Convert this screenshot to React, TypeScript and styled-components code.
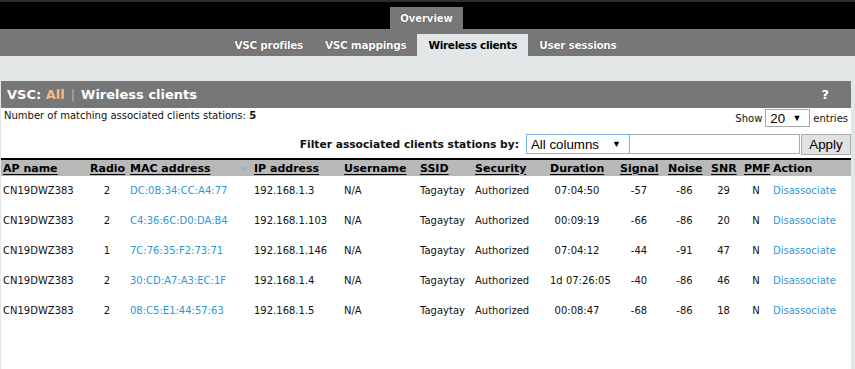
import React from "react";
import styled, { createGlobalStyle } from "styled-components";

const GlobalStyle = createGlobalStyle`
  html, body { margin: 0; padding: 0; }
  body {
    background: #e3e7e8;
    font-family: "DejaVu Sans", Verdana, sans-serif;
    color: #111;
    height: 369px;
    overflow: hidden;
  }
  * { box-sizing: border-box; }
`;

const TopBar = styled.div`
  height: 29px;
  background: #000;
  border-top: 2px solid #2e2e2e;
  display: flex;
  justify-content: center;
  align-items: flex-end;
  padding-right: 2px;
`;

const MainTab = styled.div`
  height: 22px;
  padding: 0 10px;
  background: #777;
  color: #fff;
  font-weight: bold;
  font-size: 10px;
  display: flex;
  align-items: center;
  text-shadow: 0 0 1px #333;
`;

const SubNav = styled.div`
  height: 27px;
  background: #777;
  display: flex;
  justify-content: center;
  align-items: flex-end;
  padding-right: 4px;
`;

const SubTab = styled.div<{ $active?: boolean }>`
  height: 22px;
  padding: 0 11px;
  display: flex;
  align-items: center;
  font-weight: bold;
  font-size: 10.5px;
  letter-spacing: -0.3px;
  white-space: nowrap;
  background: ${(p) => (p.$active ? "#e3e7e8" : "transparent")};
  color: ${(p) => (p.$active ? "#000" : "#fff")};
  text-shadow: ${(p) => (p.$active ? "none" : "0 0 1px #222")};
`;

const Main = styled.div`
  padding: 25px 4px 0 1px;
`;

const Panel = styled.div`
  background: #fff;
  height: 288px;
`;

const PanelHeader = styled.div`
  height: 27px;
  background: #777;
  display: flex;
  align-items: center;
  justify-content: space-between;
  padding: 0 22px 0 6px;
  color: #fff;
  font-weight: bold;
  font-size: 13px;
`;

const Accent = styled.span`
  color: #f6b887;
`;

const Pipe = styled.span`
  color: #b5b5b5;
  font-weight: normal;
  margin: 0 6px;
`;

const Help = styled.span`
  font-size: 13px;
`;

const InfoRow = styled.div`
  display: flex;
  justify-content: space-between;
  align-items: flex-start;
  height: 23px;
  font-size: 10px;
`;

const Count = styled.div`
  padding: 2px 0 0 3px;
  b { font-weight: bold; }
`;

const ShowGroup = styled.div`
  display: flex;
  align-items: center;
  padding-top: 1px;
  padding-right: 3px;
  gap: 3px;
`;

const FakeSelect = styled.div<{ $w: number; $focus?: boolean }>`
  width: ${(p) => p.$w}px;
  height: ${(p) => (p.$focus ? 20 : 18)}px;
  border: 1px solid ${(p) => (p.$focus ? "#7eb4ea" : "#a9a9a9")};
  background: #fff;
  display: flex;
  align-items: center;
  justify-content: space-between;
  padding: 0 8px 0 4px;
  font-family: "Liberation Sans", Arial, sans-serif;
  font-size: 13.3px;
  color: #000;
`;

const Caret = styled.span`
  font-size: 9px;
`;

const FilterRow = styled.div`
  display: flex;
  justify-content: flex-end;
  align-items: center;
  height: 24px;
  margin-top: 1px;
`;

const FilterLabel = styled.span`
  font-weight: bold;
  font-size: 10.7px;
  margin-right: 7px;
`;

const TextInput = styled.div`
  width: 170px;
  height: 20px;
  border: 1px solid #abadb3;
  border-left: none;
  background: #fff;
`;

const ApplyButton = styled.div`
  width: 50px;
  height: 21px;
  margin-left: 1px;
  border: 1px solid #adadad;
  background: #e1e1e1;
  font-family: "Liberation Sans", Arial, sans-serif;
  font-size: 13.3px;
  color: #000;
  display: flex;
  align-items: center;
  justify-content: center;
`;

const Table = styled.table`
  width: 850px;
  table-layout: fixed;
  border-collapse: collapse;
  margin-top: 2px;
  border-top: 2px solid #000;
`;

const HeadCell = styled.th<{ $align?: string; $pr?: number }>`
  height: 17px;
  background: #b9b9b9;
  font-size: 11px;
  font-weight: bold;
  text-align: ${(p) => p.$align || "left"};
  padding: 0 ${(p) => p.$pr ?? 0}px 0 2px;
  white-space: nowrap;
  position: relative;
  color: #000;
  u { text-decoration: underline; text-underline-offset: 2px; }
`;

const SortArrow = styled.span`
  position: absolute;
  right: 3px;
  top: 7px;
  width: 0;
  height: 0;
  border-left: 4px solid transparent;
  border-right: 4px solid transparent;
  border-top: 4px solid #8db8da;
`;

const Cell = styled.td<{ $align?: string; $pr?: number }>`
  height: 30px;
  font-size: 10px;
  text-align: ${(p) => p.$align || "left"};
  padding: 0 ${(p) => p.$pr ?? 0}px 2px 2px;
  white-space: nowrap;
  color: #111;
`;

const Link = styled.span`
  color: #2f97d4;
`;

type Col = { title: string; w: number; align?: string; pr?: number; sort?: boolean; plain?: boolean };

const cols: Col[] = [
  { title: "AP name", w: 87 },
  { title: "Radio", w: 40, align: "center", pr: 4 },
  { title: "MAC address", w: 124, sort: true },
  { title: "IP address", w: 90 },
  { title: "Username", w: 76 },
  { title: "SSID", w: 55 },
  { title: "Security", w: 75 },
  { title: "Duration", w: 70, align: "center", pr: 14 },
  { title: "Signal", w: 48, align: "center", pr: 8 },
  { title: "Noise", w: 43, align: "center", pr: 8 },
  { title: "SNR", w: 33, align: "center", pr: 6 },
  { title: "PMF", w: 29, align: "center", pr: 3 },
  { title: "Action", w: 80, plain: true },
];

const rows = [
  ["CN19DWZ383", "2", "DC:0B:34:CC:A4:77", "192.168.1.3", "N/A", "Tagaytay", "Authorized", "07:04:50", "-57", "-86", "29", "N"],
  ["CN19DWZ383", "2", "C4:36:6C:D0:DA:B4", "192.168.1.103", "N/A", "Tagaytay", "Authorized", "00:09:19", "-66", "-86", "20", "N"],
  ["CN19DWZ383", "1", "7C:76:35:F2:73:71", "192.168.1.146", "N/A", "Tagaytay", "Authorized", "07:04:12", "-44", "-91", "47", "N"],
  ["CN19DWZ383", "2", "30:CD:A7:A3:EC:1F", "192.168.1.4", "N/A", "Tagaytay", "Authorized", "1d 07:26:05", "-40", "-86", "46", "N"],
  ["CN19DWZ383", "2", "08:C5:E1:44:57:63", "192.168.1.5", "N/A", "Tagaytay", "Authorized", "00:08:47", "-68", "-86", "18", "N"],
];

export default function App() {
  return (
    <>
      <GlobalStyle />
      <TopBar>
        <MainTab>Overview</MainTab>
      </TopBar>
      <SubNav>
        <SubTab>VSC profiles</SubTab>
        <SubTab>VSC mappings</SubTab>
        <SubTab $active>Wireless clients</SubTab>
        <SubTab>User sessions</SubTab>
      </SubNav>
      <Main>
        <Panel>
          <PanelHeader>
            <span>
              VSC: <Accent>All</Accent>
              <Pipe>|</Pipe>Wireless clients
            </span>
            <Help>?</Help>
          </PanelHeader>
          <InfoRow>
            <Count>
              Number of matching associated clients stations: <b>5</b>
            </Count>
            <ShowGroup>
              <span>Show</span>
              <FakeSelect $w={45}>
                <span>20</span>
                <Caret>▼</Caret>
              </FakeSelect>
              <span>entries</span>
            </ShowGroup>
          </InfoRow>
          <FilterRow>
            <FilterLabel>Filter associated clients stations by:</FilterLabel>
            <FakeSelect $w={104} $focus>
              <span>All columns</span>
              <Caret>▼</Caret>
            </FakeSelect>
            <TextInput />
            <ApplyButton>Apply</ApplyButton>
          </FilterRow>
          <Table>
            <colgroup>
              {cols.map((c) => (
                <col key={c.title} style={{ width: c.w }} />
              ))}
            </colgroup>
            <thead>
              <tr>
                {cols.map((c) => (
                  <HeadCell key={c.title} $align={c.align} $pr={c.pr}>
                    {c.plain ? c.title : <u>{c.title}</u>}
                    {c.sort && <SortArrow />}
                  </HeadCell>
                ))}
              </tr>
            </thead>
            <tbody>
              {rows.map((r, i) => (
                <tr key={i}>
                  {r.map((v, j) => (
                    <Cell key={j} $align={cols[j].align} $pr={cols[j].pr}>
                      {j === 2 ? <Link>{v}</Link> : v}
                    </Cell>
                  ))}
                  <Cell>
                    <Link>Disassociate</Link>
                  </Cell>
                </tr>
              ))}
            </tbody>
          </Table>
        </Panel>
      </Main>
    </>
  );
}
